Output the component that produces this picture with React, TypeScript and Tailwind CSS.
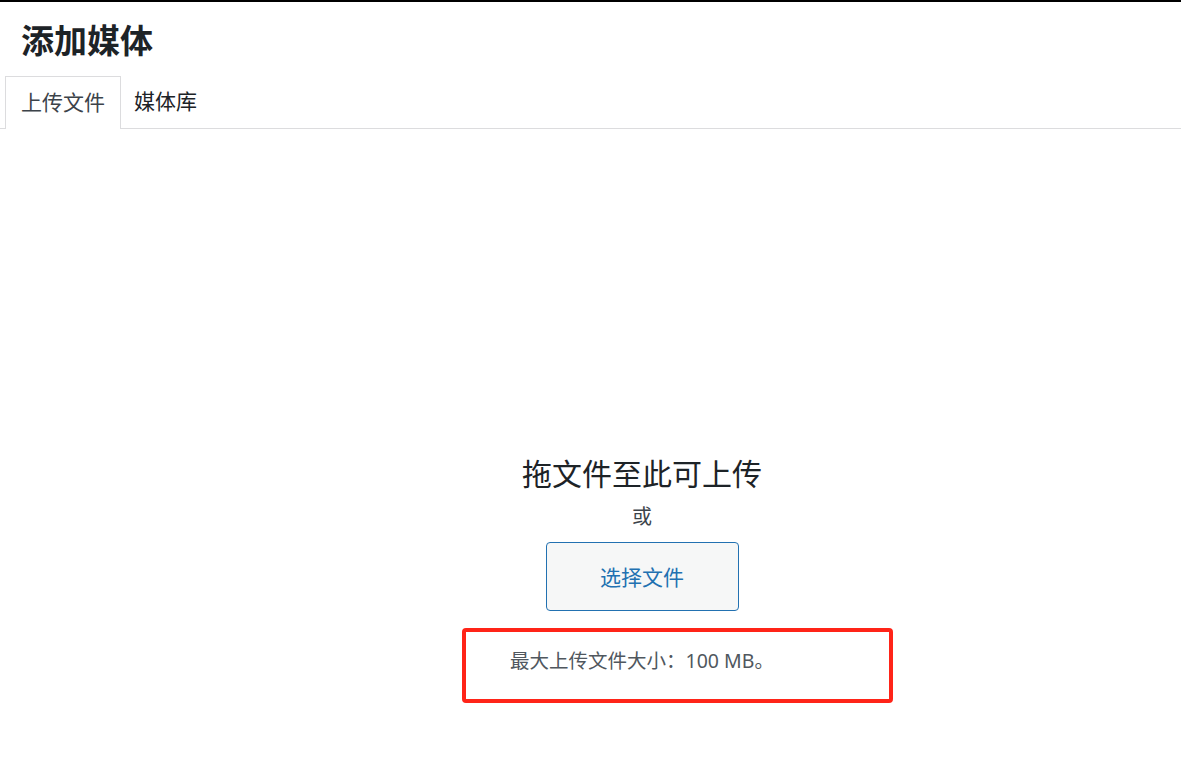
export default function App() {
    return (
        <div className="relative min-h-[769px] bg-white text-[#1d2327] font-['Noto_Sans','Noto_Sans_CJK_SC',sans-serif]">
            <div className="h-[2px] bg-black" />
            <h1 className="pl-[21px] pt-[19px] text-[33px] font-bold leading-[40px] text-[#1d2327]">添加媒体</h1>

            {/* tabs */}
            <div className="mt-[15px] flex h-[53px] border-b border-[#dcdcde] pl-[5px]">
                <div className="-mb-px flex h-[53px] items-center border border-b-0 border-[#dcdcde] bg-white px-[15px] text-[21px] text-[#3c434a]">
                    上传文件
                </div>
                <div className="flex items-center px-[13px] text-[21px] text-[#1d2327]">媒体库</div>
            </div>

            {/* drop zone */}
            <div className="flex flex-col items-center pl-[103px] pt-[327px]">
                <p className="text-[30px] leading-[36px] text-[#1d2327]">拖文件至此可上传</p>
                <p className="mt-[10px] text-[20px] leading-[30px] text-[#3c434a]">或</p>
                <button className="mt-[10px] flex h-[69px] w-[193px] items-center justify-center rounded-[4px] border border-[#2271b1] bg-[#f6f7f7] pt-[2px] text-[21px] text-[#2271b1]">
                    选择文件
                </button>
                <p className="mt-[35px] text-[19.5px] leading-[30px] text-[#50575e]">最大上传文件大小：100 MB。</p>
            </div>

            {/* annotation box */}
            <div className="absolute left-[462px] top-[628px] h-[75px] w-[431px] rounded-[4px] border-[4px] border-[#ff2418]" />
        </div>
    );
}
